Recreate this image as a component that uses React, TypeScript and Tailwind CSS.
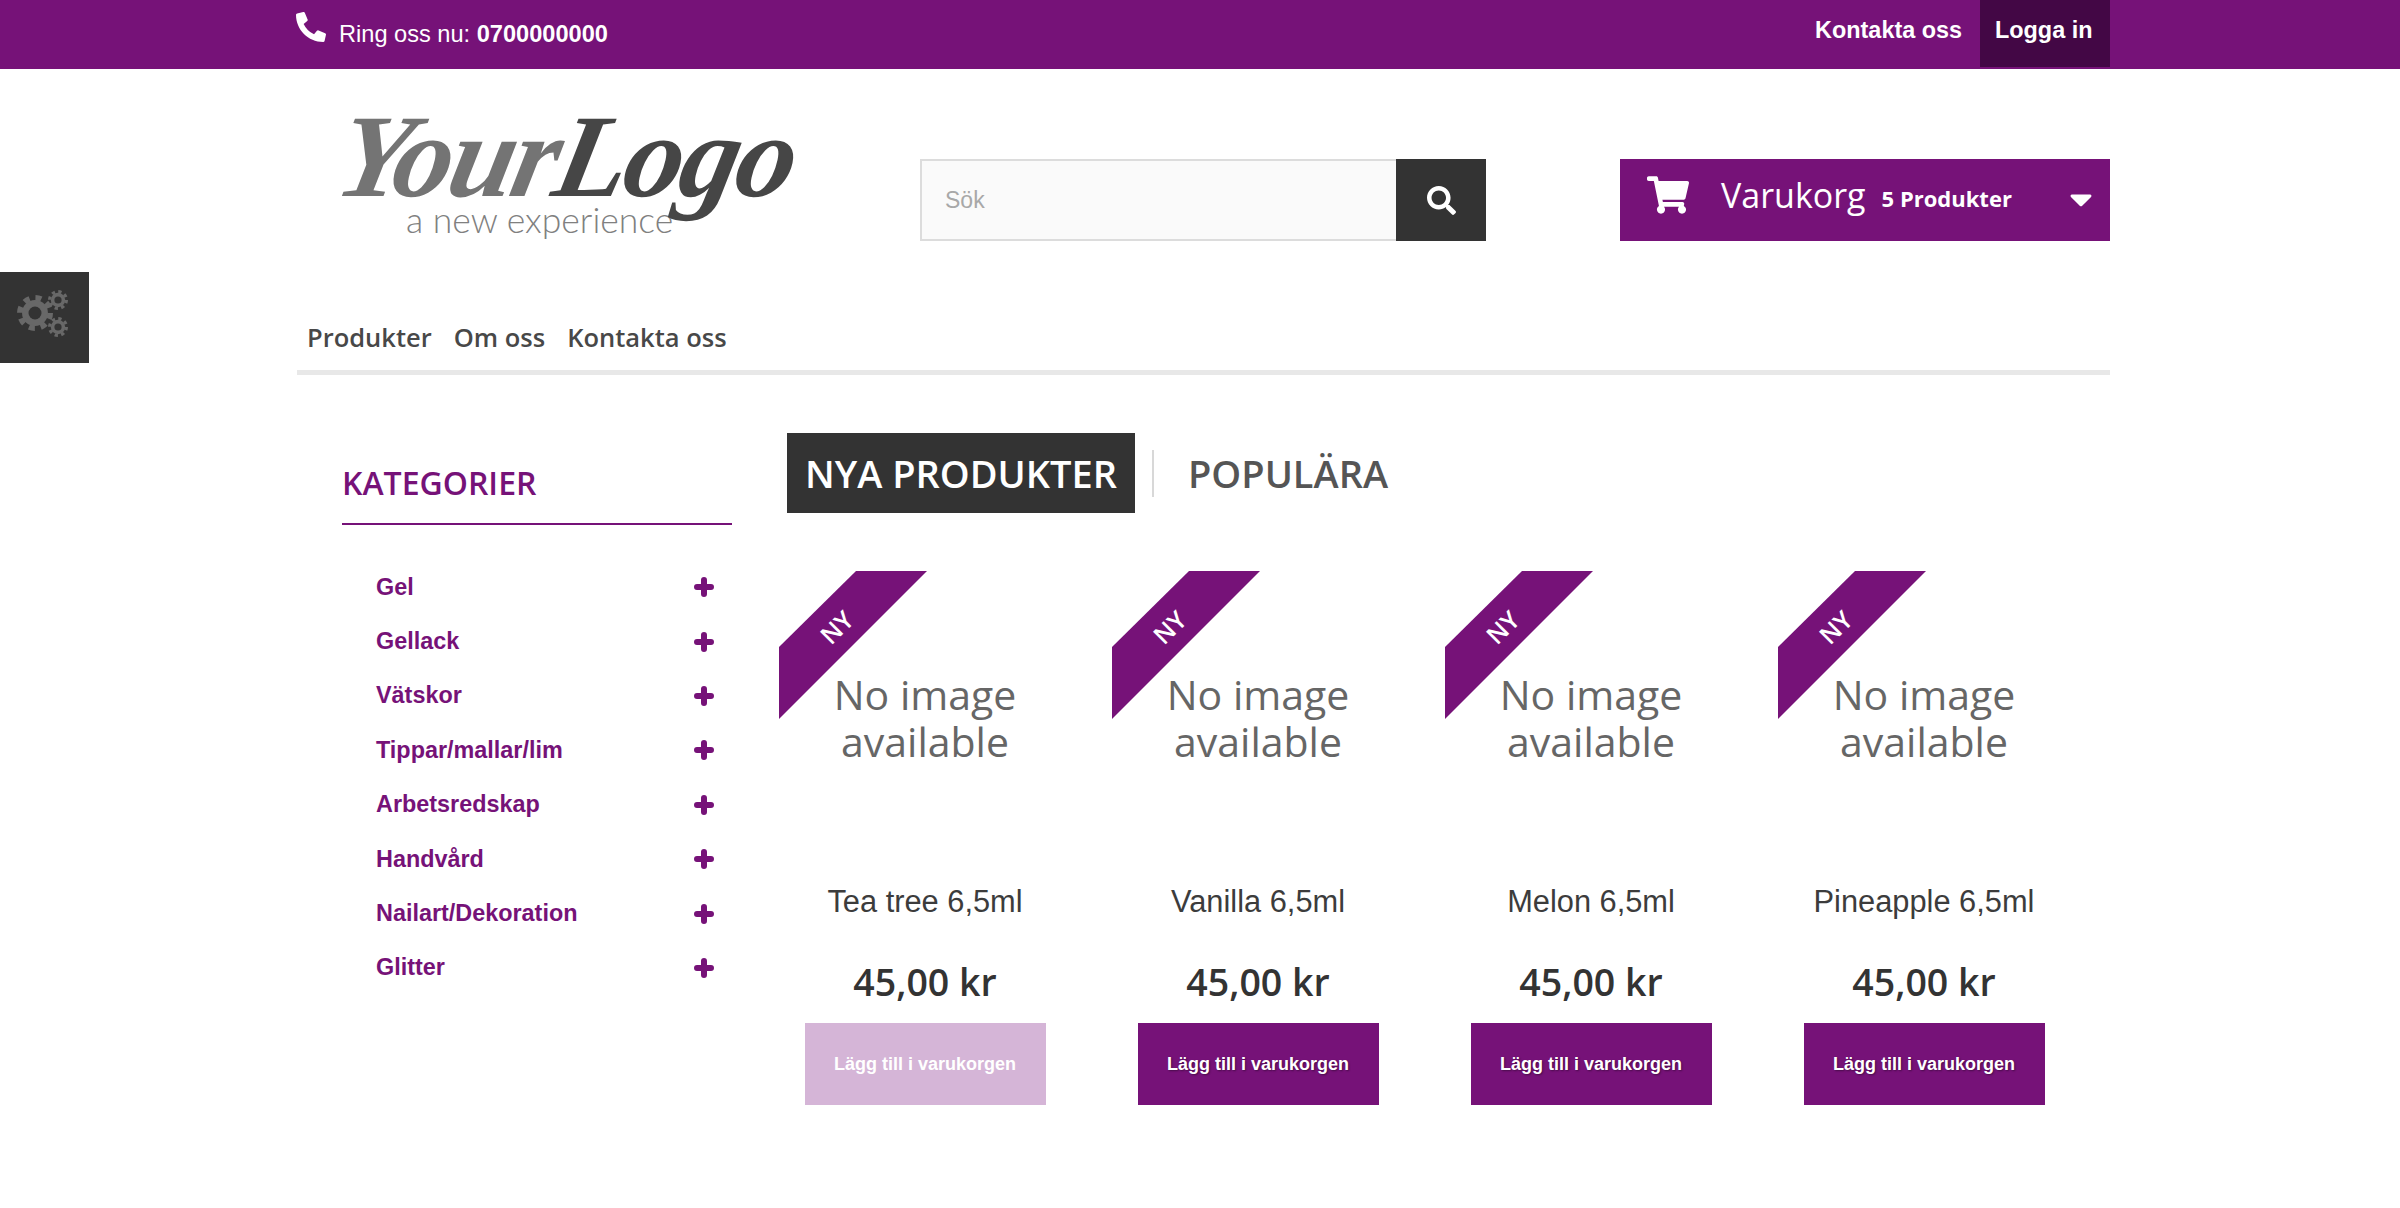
import { FaPhoneAlt, FaSearch, FaShoppingCart, FaCaretDown } from "react-icons/fa";

const categories = ["Gel", "Gellack", "Vätskor", "Tippar/mallar/lim", "Arbetsredskap", "Handvård", "Nailart/Dekoration", "Glitter"];

const products = [
  { name: "Tea tree 6,5ml", faded: true },
  { name: "Vanilla 6,5ml", faded: false },
  { name: "Melon 6,5ml", faded: false },
  { name: "Pineapple 6,5ml", faded: false },
];

function Gear({ x, y, r }: { x: number; y: number; r: number }) {
  const ring = r * 0.84;
  const dash = (2 * Math.PI * ring) / 16;
  return (
    <g>
      <circle cx={x} cy={y} r={r * 0.72} fill="#686868" />
      <circle cx={x} cy={y} r={ring} fill="none" stroke="#686868" strokeWidth={r * 0.32} strokeDasharray={`${dash} ${dash}`} />
      <circle cx={x} cy={y} r={r * 0.36} fill="#333333" />
    </g>
  );
}

function TopBar() {
  return (
    <div className="h-[69px] bg-[#761278] text-white">
      <div className="ml-[296px] w-[1814px] flex justify-between">
        <div className="flex items-start">
          <FaPhoneAlt size={30} className="mt-[12px]" />
          <span className="ml-[13px] mt-[19px] text-[23.6px] leading-[30px]">
            Ring oss nu: <b>0700000000</b>
          </span>
        </div>
        <div className="flex items-start font-bold text-[23.4px]">
          <a className="mt-[15px] mr-[18px] leading-[30px]">Kontakta oss</a>
          <a className="h-[67px] w-[130px] bg-[#430745] pt-[15px] pl-[15px] leading-[30px]">Logga in</a>
        </div>
      </div>
    </div>
  );
}

function Logo() {
  return (
    <div className="w-[623px] h-[82px] -mt-[54px] pl-[32px] select-none">
      <div className="h-[104px] leading-[104px] whitespace-nowrap font-['Liberation_Serif',serif] font-bold italic text-[118px] tracking-[-3px] -skew-x-12 origin-bottom-left">
        <span className="text-[#747474]">Your</span>
        <span className="text-[#464646]">Logo</span>
      </div>
      <div className="ml-[77px] -mt-[7px] text-[35.5px] leading-[36px] font-light font-['Lato',sans-serif] text-[#808080]">a new experience</div>
    </div>
  );
}

function Header() {
  return (
    <div className="pt-[90px] flex items-start">
      <Logo />
      <div className="flex h-[82px] w-[566px]">
        <div className="flex-1 bg-[#fafafa] border-2 border-[#dcdcdc] border-r-0 pl-[23px] flex items-center text-[23px] text-[#a8a8a8]">Sök</div>
        <button className="w-[90px] bg-[#333333] text-white flex items-center justify-center">
          <FaSearch size={29} />
        </button>
      </div>
      <div className="ml-auto w-[490px] h-[82px] bg-[#761278] text-white flex items-start font-['Open_Sans',sans-serif]">
        <FaShoppingCart size={42} className="ml-[27px] mt-[15px]" />
        <span className="ml-[32px] mt-[13px] text-[34px] leading-[46px] font-medium">Varukorg</span>
        <span className="ml-[16px] mt-[21px] text-[22px] leading-[36px] font-bold">5 Produkter</span>
        <FaCaretDown size={36} className="ml-[51px] mt-[22px]" />
      </div>
    </div>
  );
}

function Nav() {
  return (
    <div className="mt-[75px] pb-[12px] pl-[10px] border-b-[5px] border-[#e8e8e8] flex gap-[22px] text-[25.5px] leading-[42px] font-semibold text-[#484848] font-['Open_Sans',sans-serif]">
      <a>Produkter</a>
      <a>Om oss</a>
      <a>Kontakta oss</a>
    </div>
  );
}

function Sidebar() {
  return (
    <div className="ml-[45px] w-[390px] pt-[30px]">
      <h2 className="pb-[20px] border-b-2 border-[#761278] text-[32px] leading-[40px] font-semibold text-[#761278] font-['Open_Sans',sans-serif]">KATEGORIER</h2>
      <ul className="mt-[35px] pl-[34px] pr-[18px]">
        {categories.map((c) => (
          <li key={c} className="h-[54.4px] flex items-center justify-between text-[23.4px] font-bold text-[#761278]">
            {c}
            <svg width="20" height="20" viewBox="0 0 20 20" stroke="#761278" strokeWidth="6" strokeLinecap="round">
              <path d="M3 10H17M10 3V17" />
            </svg>
          </li>
        ))}
      </ul>
    </div>
  );
}

function Tabs() {
  return (
    <div className="ml-[8px] flex items-center font-['Open_Sans',sans-serif] font-semibold text-[38px]">
      <div className="h-[80px] w-[348px] bg-[#333333] text-white flex items-center justify-center">NYA PRODUKTER</div>
      <div className="ml-[17px] h-[47px] w-[2px] bg-[#d8d8d8]" />
      <div className="ml-[34px] text-[#555555]">POPULÄRA</div>
    </div>
  );
}

function ProductCard({ name, faded }: { name: string; faded: boolean }) {
  return (
    <div className="relative w-[292px] flex flex-col items-center">
      {/* NY ribbon */}
      <svg className="absolute left-0 top-0" width="149" height="149" viewBox="0 0 149 149">
        <polygon points="77,0 148,0 0,148 0,76" fill="#761278" />
      </svg>
      <span className="absolute left-[40px] top-[41px] w-[34px] text-center -rotate-45 text-white font-semibold text-[25px] leading-[30px] font-['Open_Sans',sans-serif]">NY</span>

      <div className="h-[311px] pt-[100px] text-center text-[41px] leading-[47px] text-[#666666] font-['Open_Sans',sans-serif]">
        No image
        <br />
        available
      </div>
      <div className="text-[30.8px] leading-[40px] text-[#3c3c3c] whitespace-nowrap">{name}</div>
      <div className="mt-[35px] text-[37.5px] leading-[50px] font-semibold text-[#333333] font-['Open_Sans',sans-serif]">45,00 kr</div>
      <button className={`mt-[16px] w-[241px] h-[82px] text-[18px] font-bold text-white ${faded ? "bg-[#d5b5d7]" : "bg-[#761278] [text-shadow:1px_1px_2px_rgba(0,0,0,0.4)]"}`}>
        Lägg till i varukorgen
      </button>
    </div>
  );
}

export default function App() {
  return (
    <div className="relative min-h-[1208px] bg-white font-['Liberation_Sans',Arial,sans-serif] overflow-hidden">
      <TopBar />
      {/* Settings tab on the left edge */}
      <div className="absolute left-0 top-[272px] w-[89px] h-[91px] bg-[#333333]">
        <svg width="89" height="91" viewBox="0 0 89 91">
          <Gear x={35} y={41} r={18} />
          <Gear x={58} y={28} r={10} />
          <Gear x={58} y={55} r={10} />
        </svg>
      </div>
      <div className="ml-[297px] w-[1813px]">
        <Header />
        <Nav />
        <div className="mt-[58px] flex">
          <Sidebar />
          <div className="ml-[47px] flex-1">
            <Tabs />
            <div className="mt-[58px] flex gap-[41px]">
              {products.map((p) => (
                <ProductCard key={p.name} name={p.name} faded={p.faded} />
              ))}
            </div>
          </div>
        </div>
      </div>
    </div>
  );
}
